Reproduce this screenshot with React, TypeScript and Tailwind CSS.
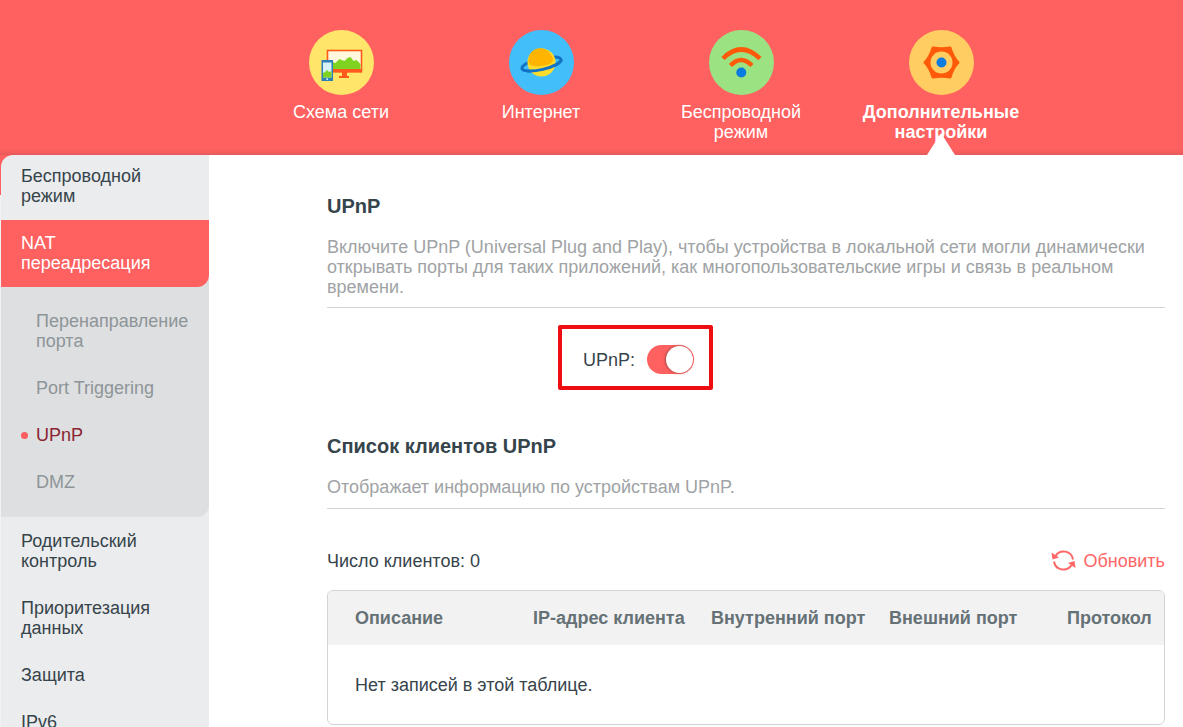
import { useState } from 'react';
import type { ReactNode } from 'react';
import clsx from 'clsx';

const MapIcon = () => (
	<svg className="size-[65px]" viewBox="0 0 65 65" aria-hidden="true">
		<circle cx="32.5" cy="32.5" r="32.5" fill="#ffe66b" />
		<rect x="18.5" y="20.5" width="34" height="21" fill="#fff8dc" stroke="#ff5a1c" strokeWidth="1.6" />
		<path
			d="M19.5 39v-3l4-4 3 1 4-4 2 1 3 1 3-3 3-1 3 4 3-1 4 4v5z"
			fill="#7ed321"
		/>
		<rect x="18" y="39" width="35" height="3.5" fill="#ff5a1c" />
		<path d="M33 42h5v4h2v2H30v-2h3z" fill="#ff5a1c" />
		<rect x="12.5" y="30" width="11.5" height="21" fill="#2d7fb8" />
		<rect x="14" y="32.5" width="8.5" height="15" fill="#d9f2f7" />
		<path d="M14 47.5V43l2-1 2-2 2 2 2.5-1v6.5z" fill="#7ed321" />
		<circle cx="18.2" cy="49.2" r="0.9" fill="#d9f2f7" />
	</svg>
);

const InternetIcon = () => (
	<svg className="size-[65px]" viewBox="0 0 65 65" aria-hidden="true">
		<circle cx="32.5" cy="32.5" r="32.5" fill="#42bffa" />
		<ellipse
			cx="32.5"
			cy="34"
			rx="20"
			ry="5.5"
			transform="rotate(-13 32.5 34)"
			fill="none"
			stroke="#1273c4"
			strokeWidth="3"
		/>
		<circle cx="32.5" cy="32.5" r="14" fill="#fedc2e" />
		<path d="M20 34a12 12 0 0 1 21-11c5 6 4 10-3 12-7 2-14 2-18-1z" fill="#ffb400" />
		<path
			d="M13 38.500a20 5.500 -13 0 0 39-9"
			fill="none"
			stroke="#1273c4"
			strokeWidth="3"
		/>
	</svg>
);

const WirelessIcon = () => (
	<svg className="size-[65px]" viewBox="0 0 65 65" aria-hidden="true">
		<circle cx="32.5" cy="32.5" r="32.5" fill="#9be282" />
		<g fill="none" stroke="#ff5a0a" strokeWidth="4.5">
			<path d="M14 28.500q18-18 37 0" />
			<path d="M21.500 35.500q10.500-11 21.500 0" />
		</g>
		<circle cx="32.3" cy="42.5" r="5" fill="#0a7be0" />
	</svg>
);

const AdvancedIcon = () => (
	<svg className="size-[65px]" viewBox="0 0 65 65" aria-hidden="true">
		<circle cx="32.5" cy="32.5" r="32.5" fill="#ffcd61" />
		<path
			d="M16 32.500q5-5 8-14.500 8.500 1.500 17 0 3 9.500 8 14.500-5 5-8 14.500-8.500-1.500-17 0-3-9.500-8-14.500z"
			fill="#ff5a0a"
			stroke="#ff5a0a"
			strokeWidth="3"
			strokeLinejoin="round"
		/>
		<circle cx="32.5" cy="32.5" r="11" fill="#ffcd61" />
		<circle cx="32.5" cy="32.5" r="5" fill="#0a7be0" />
	</svg>
);

const RefreshIcon = () => (
	<svg className="size-[25px]" viewBox="0 0 25 25" aria-hidden="true">
		<g fill="none" stroke="#f66" strokeWidth="2">
			<path d="M4.500 8A9.500 9.500 0 0 1 22 11.500" />
			<path d="M3 13.500A9.500 9.500 0 0 0 20.500 17" />
		</g>
		<path d="M0.500 4.500 1.500 11.500 8 9.500z" fill="#f66" />
		<path d="M24.500 20 23.500 13 17 15z" fill="#f66" />
	</svg>
);

interface Tab {
	title: string;
	icon: ReactNode;
	active?: boolean;
}

const tabs: Tab[] = [
	{ title: 'Схема сети', icon: <MapIcon /> },
	{ title: 'Интернет', icon: <InternetIcon /> },
	{ title: 'Беспроводной режим', icon: <WirelessIcon /> },
	{ title: 'Дополнительные настройки', icon: <AdvancedIcon />, active: true },
];

const natPages = ['Перенаправление порта', 'Port Triggering', 'UPnP', 'DMZ'];
const otherSections = ['Родительский контроль', 'Приоритезация данных', 'Защита', 'IPv6'];
const columns = ['Описание', 'IP-адрес клиента', 'Внутренний порт', 'Внешний порт', 'Протокол'];

const Header = () => (
	<header className="shrink-0 bg-[#ff6160] pl-[99px] shadow-[inset_0_-6px_5px_-4px_#e0585a]">
		<nav className="flex h-[155px] justify-center">
			{tabs.map((tab) => (
				<a
					key={tab.title}
					href="#"
					className={clsx(
						'relative flex w-[200px] flex-col items-center gap-[7px] px-5 pt-[30px] text-center text-white',
						tab.active && 'font-bold'
					)}
				>
					{tab.icon}
					<span>{tab.title}</span>
					{tab.active && (
						<svg
							className="absolute bottom-0 left-1/2 h-[22px] w-[28px] -translate-x-1/2"
							viewBox="0 0 28 22"
							aria-hidden="true"
						>
							<path d="M14 0 28 22H0z" fill="#fff" />
						</svg>
					)}
				</a>
			))}
		</nav>
	</header>
);

const Sidebar = () => (
	<aside className="w-[208px] shrink-0 overflow-hidden rounded-tl-xl bg-[#ebeced]">
		<nav>
			<a href="#" className="block px-5 pt-[11px] pb-[14px]">
				Беспроводной режим
			</a>
			<div className="rounded-br-xl bg-[#dedfe0]">
				<a href="#" className="block rounded-br-xl bg-[#ff6160] px-5 pt-[13px] pb-[14px] text-white">
					NAT переадресация
				</a>
				<ul className="py-[11px]">
					{natPages.map((page) => (
						<li key={page}>
							<a
								href="#"
								className={clsx(
									'flex items-center pt-[13px] pr-5 pb-[14px]',
									page === 'UPnP' ? 'gap-2 pl-5 text-[#8a2430]' : 'pl-[35px] text-[#8d9599]'
								)}
							>
								{page === 'UPnP' && <span className="size-[7px] rounded-full bg-[#f95d5f]" />}
								{page}
							</a>
						</li>
					))}
				</ul>
			</div>
			<div className="pt-px">
				{otherSections.map((section) => (
					<a key={section} href="#" className="block px-5 pt-[13px] pb-[14px]">
						{section}
					</a>
				))}
			</div>
		</nav>
	</aside>
);

const App = () => {
	const [enabled, setEnabled] = useState(true);

	return (
		<div className="flex h-screen flex-col overflow-hidden bg-[linear-gradient(#ff6160_195px,#f2f2f2_195px)] font-['Liberation_Sans',Arial,sans-serif] text-[18px] leading-5 text-[#36444b]">
			<Header />
			<div className="ml-px flex min-h-0 flex-1">
				<Sidebar />
				<main className="min-w-0 flex-1 bg-white pt-10 pr-[18px] pl-[118px]">
					<section>
						<h1 className="text-[20px] leading-[22px] font-bold">UPnP</h1>
						<p className="mt-5 border-b border-[#d4d4d4] pb-[10px] text-[#a0a3a5]">
							Включите UPnP (Universal Plug and Play), чтобы устройства в локальной сети могли
							динамически открывать порты для таких приложений, как многопользовательские игры и
							связь в реальном времени.
						</p>
						<div className="mt-[17px] ml-[231px] flex h-[65px] w-[155px] items-center gap-3 rounded-xs border-4 border-[#ee0d10] pt-1 pl-[21px]">
							<label htmlFor="upnp">UPnP:</label>
							<input
								id="upnp"
								type="checkbox"
								checked={enabled}
								onChange={(e) => setEnabled(e.target.checked)}
								className="flex h-[29px] w-[47px] shrink-0 appearance-none items-center rounded-full bg-gray-300 p-px before:size-[27px] before:rounded-full before:bg-white before:shadow-[-1px_0_3px_#a8484a] checked:justify-end checked:bg-[#ff6160]"
							/>
						</div>
					</section>
					<section className="mt-[45px]">
						<h2 className="text-[20px] leading-[22px] font-bold">Список клиентов UPnP</h2>
						<p className="mt-5 border-b border-[#d4d4d4] pb-[11px] text-[#a0a3a5]">
							Отображает информацию по устройствам UPnP.
						</p>
						<div className="mt-[39px] flex items-center justify-between">
							<span>Число клиентов: 0</span>
							<button type="button" className="flex items-center gap-[7px] text-[#f66]">
								<RefreshIcon />
								Обновить
							</button>
						</div>
						<div className="mt-[17px] overflow-hidden rounded-md border border-[#d4d4d4]">
							<table className="w-full table-fixed text-left">
								<thead className="bg-[#f2f2f3] text-[#657175]">
									<tr className="h-[54px]">
										{columns.map((column) => (
											<th
												key={column}
												className="w-[178px] pl-[27px] font-bold whitespace-nowrap last:w-auto"
											>
												{column}
											</th>
										))}
									</tr>
								</thead>
								<tbody>
									<tr className="h-[79px]">
										<td colSpan={columns.length} className="pl-[27px]">
											Нет записей в этой таблице.
										</td>
									</tr>
								</tbody>
							</table>
						</div>
					</section>
				</main>
			</div>
		</div>
	);
};

export default App;
